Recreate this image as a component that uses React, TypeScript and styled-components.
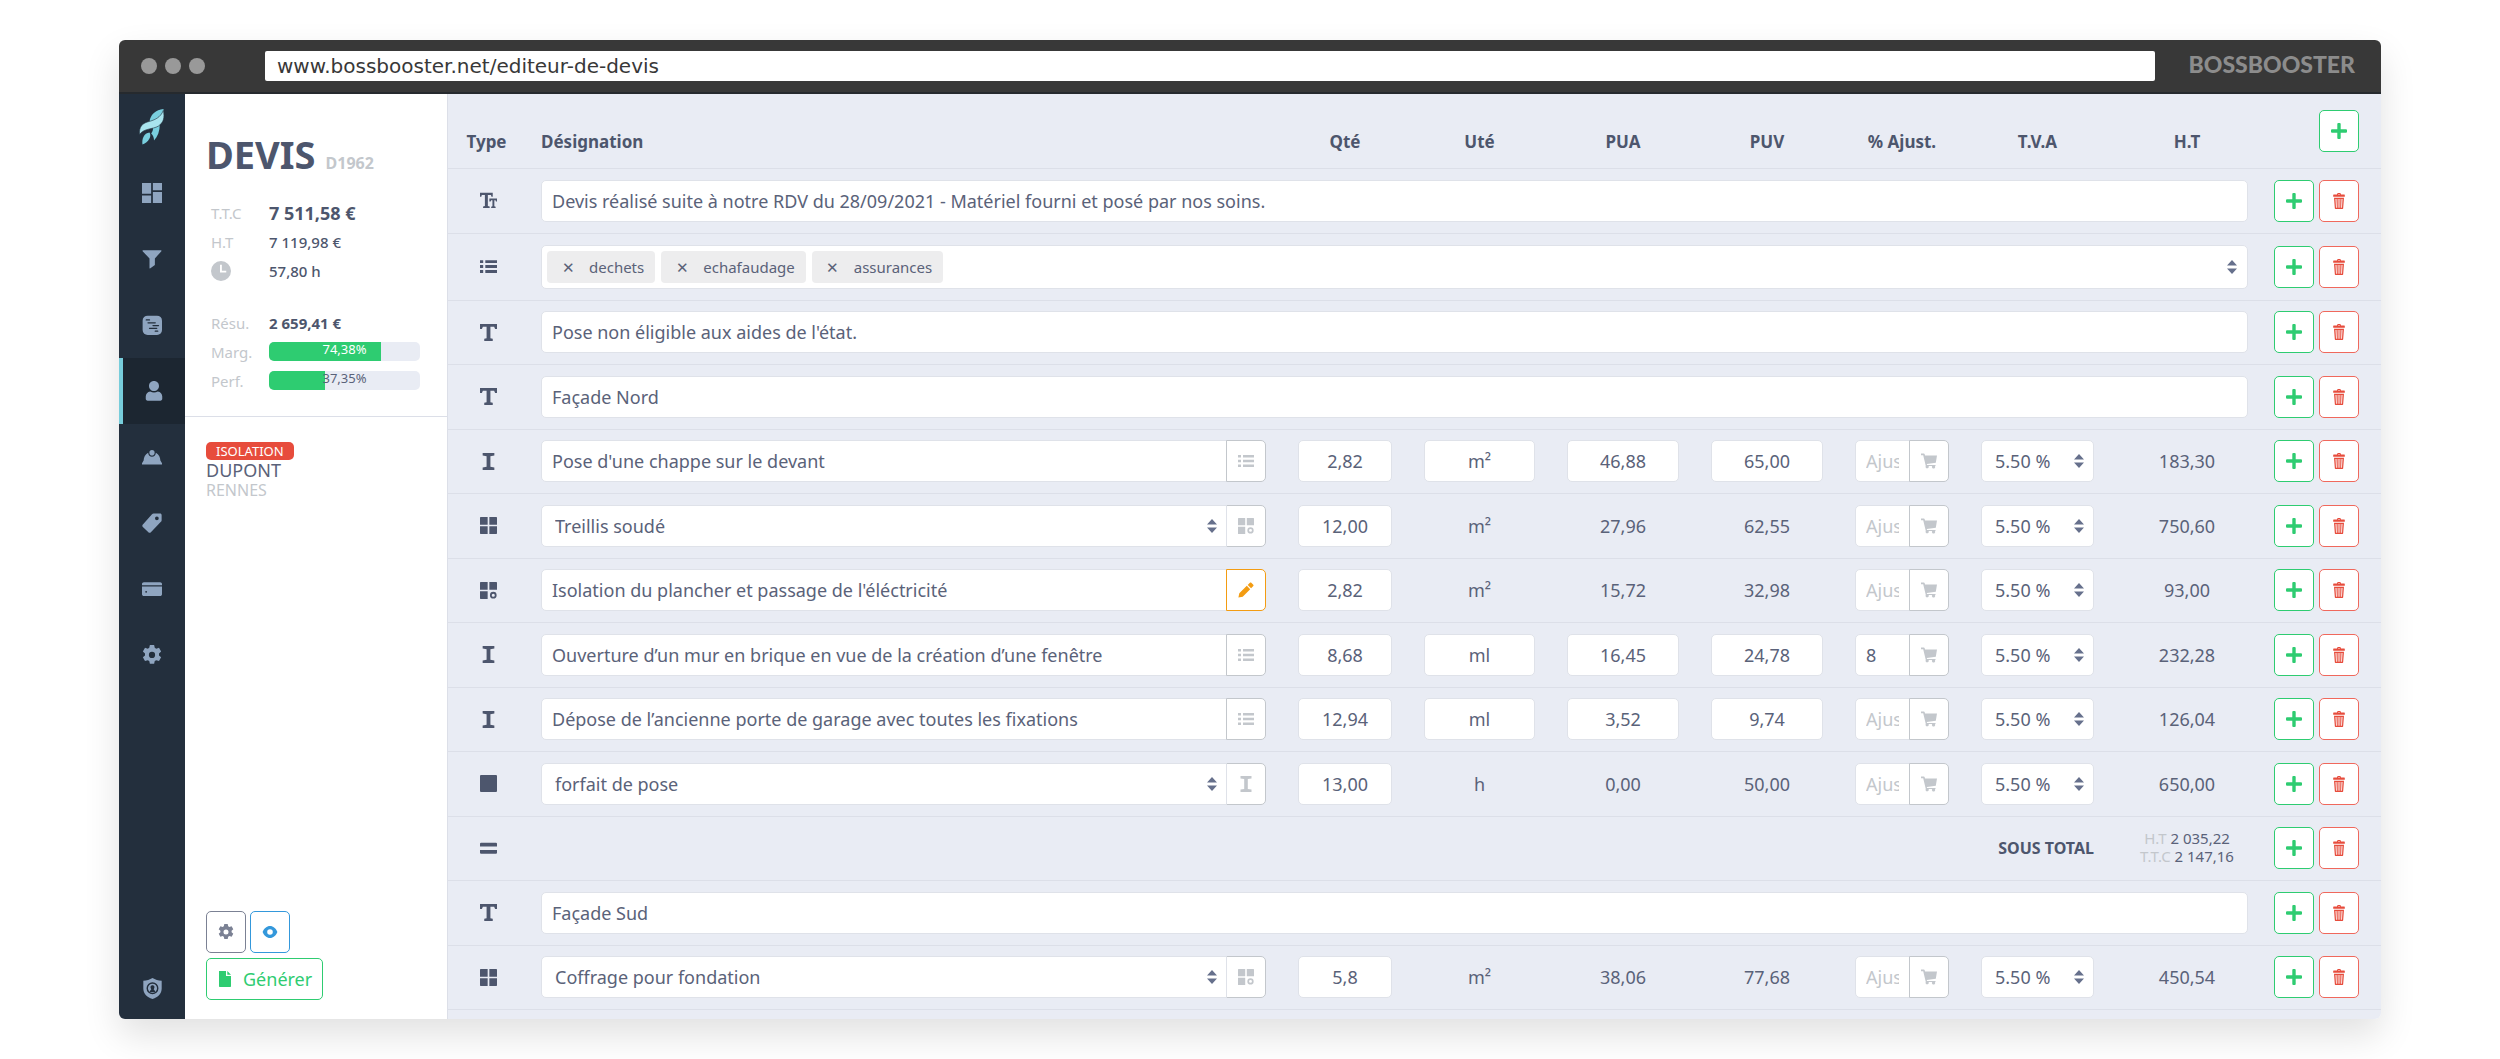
import React from "react";
import styled, { createGlobalStyle, css } from "styled-components";

const color = {
  text: "#5a6279",
  strong: "#4d566d",
  muted: "#c3c7cc",
  line: "#dcdfe8",
  field: "#dfe2e9",
  panel: "#e9ecf4",
  rail: "#232f3d",
  railActive: "#1c2631",
  railIcon: "#8fa5c0",
  green: "#2ecc71",
  red: "#e74c3c",
  redBorder: "#f0685c",
  orange: "#f39c12",
  blue: "#3498db",
  grey: "#7b8194",
};

const GlobalStyle = createGlobalStyle`
  *, *::before, *::after { box-sizing: border-box; }
  body {
    margin: 0;
    background: #fff;
    color: ${color.text};
    font-family: "Noto Sans", "Open Sans", sans-serif;
    font-size: 18px;
    line-height: 24px;
  }
  button, input, select { font: inherit; color: inherit; margin: 0; }
  svg { display: block; fill: currentColor; }
`;

/* ---------- icons ---------- */

type IconName =
  | "textSize" | "list" | "title" | "line" | "grid" | "gridGear" | "square" | "equals"
  | "plus" | "trash" | "cart" | "pencil" | "gear" | "eye" | "file" | "clock"
  | "dashboard" | "funnel" | "notes" | "user" | "helmet" | "tag" | "card" | "shield";

const icons: Record<IconName, React.ReactNode> = {
  textSize: (
    <path d="M0 .6h12v3.800h-1.200L10.300 2.800H7.400v10.400l1.700.5V15H2.900v-1.300l1.700-.5V2.800H1.700l-.5 1.600H0zM8.800 6H16v3h-1l-.4-1.200h-1.100v5.600l1.200.4V15h-4.200v-1.200l1.200-.4V7.800h-1.200L10 9H8.800z" />
  ),
  list: (
    <path d="M0 2h3v2.600H0zM5 2h11v2.600H5zM0 6.700h3v2.600H0zM5 6.700h11v2.600H5zM0 11.400h3V14H0zM5 11.400h11V14H5z" />
  ),
  title: <path d="M0 0h16v4.800h-1.800l-.9-2.200H9.800v10.700l2.200.6V16H4v-2.100l2.200-.6V2.600H2.700l-.9 2.200H0z" />,
  line: <path d="M2.500 0h11v2.400l-3.700.6v10l3.700.6V16h-11v-2.400l3.700-.6V3l-3.700-.6z" />,
  grid: (
    <path d="M.6 0h6.600v7.300H0V.6C0 .3.300 0 .6 0zM8.800 0h6.600c.3 0 .6.300.6.6v6.700H8.800zM0 8.700h7.200V16H.6a.6.6 0 0 1-.6-.6zM8.800 8.700H16v6.700c0 .3-.3.600-.6.600H8.800z" />
  ),
  gridGear: (
    <>
      <path d="M.6 0h6.600v7.300H0V.6C0 .3.300 0 .6 0zM8.800 0h6.600c.3 0 .6.300.6.6v6.700H8.800zM0 8.700h7.200V16H.6a.6.6 0 0 1-.6-.6z" />
      <circle cx="12.500" cy="12.400" r="2.300" fill="none" stroke="currentColor" strokeWidth="1.700" />
    </>
  ),
  square: <rect width="16" height="16" rx="1" />,
  equals: <path d="M1 2.500h14a1 1 0 0 1 1 1V6H0V3.500a1 1 0 0 1 1-1zM0 9.500h16V12a1 1 0 0 1-1 1H1a1 1 0 0 1-1-1z" />,
  plus: <path d="M6.300 1a1 1 0 0 1 1-1h1.400a1 1 0 0 1 1 1v5.300H15a1 1 0 0 1 1 1v1.400a1 1 0 0 1-1 1H9.700V15a1 1 0 0 1-1 1H7.300a1 1 0 0 1-1-1V9.700H1a1 1 0 0 1-1-1V7.300a1 1 0 0 1 1-1h5.300z" />,
  trash: (
    <path
      fillRule="evenodd"
      d="M6 1.500C6.100.6 6.500 0 7.200 0h1.600c.7 0 1.100.6 1.200 1.500h3.300c.3 0 .5.200.5.500v1.700H2.200V2c0-.3.200-.5.500-.5zM6.900 1.500h2.200c0-.4-.2-.6-.5-.6H7.400c-.3 0-.5.200-.5.600zM3 4.700h10l-.8 10.200c0 .6-.4 1.100-1 1.100H4.800c-.6 0-1-.5-1-1.100zM4.500 6l.5 8.700h.8L5.500 6zM6.700 6l.1 8.700h.7V6zM8.500 6v8.700h.7l.1-8.700zM10.500 6l-.3 8.700h.8l.5-8.700z"
    />
  ),
  cart: (
    <path d="M0 .5h2.800c.4 0 .8.300.9.700L4 2.500h12l-1.200 7.300-9 1.100.2 1h8.500v1.200h-.6a1.600 1.600 0 1 1-2.700 0H7.600a1.600 1.600 0 1 1-2.800-.2L2.200 2.200H0z" />
  ),
  pencil: <path d="M1.300 11.300l7.500-7.500 3.400 3.400-7.500 7.500L.4 15.600zM9.700 2.900L11.900.7c.4-.4 1-.4 1.400 0l2 2c.4.400.4 1 0 1.400l-2.200 2.200z" />,
  gear: (
    <path
      fillRule="evenodd"
      d="M6.300 0h3.400l.5 2.200 1.200.7 2.200-.7 1.700 3-1.700 1.500v1.600l1.700 1.500-1.700 3-2.200-.7-1.200.7-.5 2.200H6.300l-.5-2.200-1.200-.7-2.200.7-1.700-3 1.700-1.500V6.700L.7 5.200l1.700-3 2.200.7 1.200-.7zM8 5.400A2.500 2.500 0 1 0 8 10.400 2.500 2.500 0 1 0 8 5.400z"
    />
  ),
  eye: (
    <path
      fillRule="evenodd"
      d="M8 2c3.200 0 6 2.400 7.400 6-1.400 3.600-4.200 6-7.400 6S2 11.600.6 8C2 4.400 4.800 2 8 2zm0 3.200a2.800 2.800 0 1 0 0 5.600 2.800 2.800 0 0 0 0-5.600z"
    />
  ),
  file: <path d="M2 0h7v5h5v10.300c0 .4-.3.700-.7.700H2.700a.7.700 0 0 1-.7-.7zM10.300 0L14 3.800h-3.700z" />,
  clock: <path fillRule="evenodd" d="M8 0a8 8 0 1 1 0 16A8 8 0 0 1 8 0zM7.200 3v6.200h5V7.800H8.700V3z" />,
  dashboard: <path d="M0 0h7.300v8.500H0zM8.700 0H16v5.700H8.700zM0 9.900h7.300V16H0zM8.700 7.100H16V16H8.700z" />,
  funnel: <path d="M.8 1h14.400c.4 0 .5.400.3.700L10.300 7.600v5.200l-3.600 2.700c-.3.200-.7 0-.7-.4V7.600L.5 1.700C.3 1.400.4 1 .8 1z" />,
  notes: (
    <>
      <rect x="0.500" y="0.500" width="15.500" height="15.500" rx="4" />
      <path
        d="M3.400 3.900H6M4.800 6.200h5.800M8.800 8.400h4.400M6 10.600h5.800M10.600 12.900h2"
        fill="none"
        stroke={color.rail}
        strokeWidth="1"
        strokeLinecap="round"
      />
    </>
  ),
  user: <path d="M8 0c2.300 0 4 1.700 4 3.900S10.300 8 8 8 4 6.100 4 3.900 5.700 0 8 0zM5 8.300c1.800 1.200 4.200 1.200 6 0 2.200.3 3.600 1.900 3.600 4v1.900c0 .9-.6 1.500-1.500 1.500H2.900c-.9 0-1.500-.6-1.500-1.500v-1.900c0-2.100 1.400-3.700 3.600-4z" />,
  helmet: (
    <>
      <path d="M4.900 4.600c.2 1.900 1.400 3.200 3.100 3.200s2.900-1.300 3.100-3.200c2.400 1.300 3.500 3.700 3.600 6.200L16 13v1H0v-1l1.300-2.200c.1-2.500 1.200-4.900 3.600-6.200z" />
      <path d="M8 2.400a2.100 2.100 0 0 1 2.100 2.100c0 1.300-.9 2.300-2.100 2.300s-2.100-1-2.100-2.300A2.100 2.100 0 0 1 8 2.400z" />
    </>
  ),
  tag: (
    <path
      fillRule="evenodd"
      d="M9.300.4h5.200c.7 0 1.200.5 1.200 1.200v4.200c0 .5-.2 1-.6 1.300l-8 8.200c-.6.600-1.400.6-2 0L.7 11.200c-.6-.6-.6-1.400 0-2L8 1c.3-.4.800-.6 1.300-.6zM11.900 2.700a1.500 1.500 0 1 0 0 3 1.500 1.500 0 0 0 0-3z"
    />
  ),
  card: (
    <path
      fillRule="evenodd"
      d="M1.500 2.500h13c.8 0 1.500.6 1.500 1.400V5H0V3.900c0-.8.700-1.400 1.500-1.400zM0 6h16v6.100c0 .8-.7 1.500-1.500 1.500h-13c-.8 0-1.500-.7-1.500-1.500zm3.300 3.500a.7.700 0 1 0 0 1.500.7.700 0 0 0 0-1.500z"
    />
  ),
  shield: (
    <>
      <path d="M8 0c2 1.300 4.400 1.900 7 2v6c0 3.800-2.600 6.700-7 8-4.400-1.300-7-4.200-7-8V2c2.600-.1 5-.7 7-2z" />
      <circle cx="8" cy="7.800" r="4" fill="none" stroke={color.rail} strokeWidth="1.100" />
      <path d="M5.900 10.700c.2-1.300.9-1.900 1.200-2.200C6 7.400 6.500 5.600 8 5.600s2 1.800.9 2.900c.3.300 1 .9 1.200 2.200z" fill={color.rail} />
    </>
  ),
};

const Icon = ({ name, size = 16 }: { name: IconName; size?: number }) => (
  <svg width={size} height={size} viewBox="0 0 16 16" aria-hidden="true">
    {icons[name]}
  </svg>
);

const Rocket = () => (
  <svg width="26" height="36" viewBox="0 0 26 36" aria-hidden="true">
    <path d="M20.800 15c0 7-2 12.500-5.800 16.500 0-3-.8-5-2.800-7 1.500-2 1.800-3.500 1.800-5.500z" fill="#79cfdf" />
    <path d="M24.500 0C17 .8 11 5.500 10.500 13l9-2C23.500 8 25 4 24.500 0z" fill="#79cfdf" />
    <path
      d="M24.300 1.500C26 8.500 24.500 13.500 19.500 17 14 20.500 5 19 .5 25.500 0 18 3 14.500 9 12.800 16 11 21.500 8.500 24.300 1.500z"
      fill="#a9e4ee"
      stroke={color.rail}
      strokeWidth="0.600"
    />
    <path d="M10.500 23.500c2.500 4-1 9.500-7 12-1-5.500 1.500-11.500 7-12z" fill="#79cfdf" />
  </svg>
);

/* ---------- window frame ---------- */

const Page = styled.div`
  display: flex;
  flex-direction: column;
  min-height: 100vh;
  padding: 40px 119px;
`;

const Window = styled.div`
  flex: 1;
  display: flex;
  flex-direction: column;
  border-radius: 6px;
  overflow: hidden;
  background: #fff;
  box-shadow: 0 16px 36px rgba(0, 0, 0, 0.12);
`;

const TitleBar = styled.header`
  display: flex;
  align-items: center;
  height: 54px;
  padding: 0 26px 0 22px;
  background: #383838;
  border-bottom: 2px solid #262a2e;
`;

const Dots = styled.div`
  display: flex;
  gap: 8px;
  margin-right: 60px;
`;

const Dot = styled.span`
  width: 16px;
  height: 16px;
  border-radius: 50%;
  background: #999;
`;

const AddressBox = styled.input`
  flex: 1;
  min-width: 0;
  height: 30px;
  margin-right: 33px;
  padding: 0 12px;
  border: 0;
  border-radius: 2px;
  background: #fff;
  color: #383838;
  font-family: "DejaVu Sans", sans-serif;
  font-size: 20px;
`;

const Brand = styled.span`
  padding-bottom: 4px;
  color: #8c8c8c;
  font-family: Lato, sans-serif;
  font-weight: 900;
  font-size: 23px;
  line-height: 24px;
`;

const Body = styled.div`
  flex: 1;
  display: grid;
  grid-template-columns: 66px 263px minmax(0, 1fr);
`;

/* ---------- navigation rail ---------- */

const Rail = styled.nav`
  display: flex;
  flex-direction: column;
  background: ${color.rail};
  color: ${color.railIcon};
`;

const RailLink = styled.a<{ $active?: boolean; $last?: boolean }>`
  display: flex;
  align-items: center;
  justify-content: center;
  height: 66px;
  color: inherit;
  ${(p) => p.$active && css`
    background: ${color.railActive};
    border-left: 4px solid #77cddb;
  `}
  ${(p) => p.$last && css`
    height: 62px;
    margin-top: auto;
  `}
`;

/* ---------- summary column ---------- */

const Summary = styled.aside`
  display: flex;
  flex-direction: column;
  border-right: 1px solid ${color.line};
  background: #fff;
`;

const SummaryHead = styled.section`
  padding: 36px 27px 21px 21px;
  border-bottom: 1px solid ${color.line};
`;

const Title = styled.h1`
  display: flex;
  align-items: baseline;
  gap: 10px;
  margin: 0 0 11px;
  color: ${color.strong};
  font-size: 38px;
  line-height: 48px;
  font-weight: 700;
`;

const Reference = styled.small`
  color: ${color.muted};
  font-size: 16px;
`;

const Figures = styled.dl`
  display: grid;
  grid-template-columns: 58px minmax(0, 1fr);
  grid-auto-rows: 29px;
  align-items: center;
  margin: 0 0 23px;
  padding-left: 5px;
  &:last-child { margin-bottom: 0; }
`;

const FigureName = styled.dt`
  color: ${color.muted};
  font-size: 15px;
`;

const FigureValue = styled.dd<{ $large?: boolean; $bold?: boolean }>`
  margin: 0;
  color: ${color.strong};
  font-size: ${(p) => (p.$large ? 18 : 15)}px;
  font-weight: ${(p) => (p.$bold ? 700 : 500)};
`;

const Meter = styled.div`
  position: relative;
  height: 19px;
  border-radius: 5px;
  background: ${color.panel};
`;

const MeterFill = styled.div`
  height: 100%;
  border-radius: 5px 0 0 5px;
  background: ${color.green};
`;

const MeterText = styled.span<{ $onFill?: boolean }>`
  position: absolute;
  inset: 0;
  color: ${(p) => (p.$onFill ? "#fff" : color.text)};
  font-size: 13px;
  font-weight: 400;
  line-height: 14px;
  text-align: center;
`;

const Client = styled.section`
  padding: 25px 21px;
`;

const Badge = styled.span`
  display: block;
  width: fit-content;
  padding: 0 10px;
  border-radius: 5px;
  background: ${color.red};
  color: #fff;
  font-size: 13px;
  line-height: 18px;
`;

const ClientName = styled.div`
  font-size: 18px;
  line-height: 20px;
`;

const ClientCity = styled.div`
  color: ${color.muted};
  font-size: 16px;
  line-height: 20px;
`;

const SummaryFoot = styled.footer`
  display: flex;
  flex-direction: column;
  align-items: flex-start;
  gap: 5px;
  margin-top: auto;
  padding: 0 21px 19px;
`;

const ButtonPair = styled.div`
  display: flex;
  gap: 4px;
`;

/* ---------- buttons ---------- */

const OutlineButton = styled.button<{ $color: string; $border?: string; $attached?: boolean }>`
  display: inline-flex;
  align-items: center;
  justify-content: center;
  gap: 10px;
  flex: none;
  width: 40px;
  height: 42px;
  padding: 0;
  border: 1px solid ${(p) => p.$border ?? p.$color};
  border-radius: 5px;
  background: #fff;
  color: ${(p) => p.$color};
  cursor: pointer;
  ${(p) => p.$attached && css`
    margin-left: -1px;
    border-top-left-radius: 0;
    border-bottom-left-radius: 0;
  `}
`;

const GenerateButton = styled(OutlineButton)`
  width: auto;
  padding: 0 10px;
`;

/* ---------- quote table ---------- */

const Main = styled.main`
  display: grid;
  padding-bottom: 9px;
  background: ${color.panel};
`;

const Table = styled.table`
  width: 100%;
  height: 100%;
  table-layout: fixed;
  border-collapse: separate;
  border-spacing: 0;
`;

const HeadRow = styled.tr`
  height: 75px;
`;

const Row = styled.tr<{ $tall?: boolean }>`
  height: ${(p) => (p.$tall ? "67px" : "auto")};
`;

const Head = styled.th<{ $left?: boolean }>`
  padding: 0 16px 14px;
  border-bottom: 1px solid ${color.line};
  color: ${color.strong};
  font-weight: 700;
  font-size: 17px;
  text-align: ${(p) => (p.$left ? "left" : "center")};
  vertical-align: bottom;
`;

const HeadAction = styled(Head)`
  padding: 16px 22px 0 0;
  text-align: right;
  vertical-align: top;
`;

const Cell = styled.td`
  padding: 10px 16px;
  border-bottom: 1px solid ${color.line};
  text-align: center;
`;

const TypeCell = styled(Cell)`
  padding-left: 32px;
  color: ${color.strong};
`;

const ActionCell = styled(Cell)`
  padding: 10px 22px 10px 0;
`;

const Actions = styled.div`
  display: flex;
  justify-content: flex-end;
  gap: 5px;
`;

const SubtotalLabel = styled(Cell)`
  color: ${color.strong};
  font-size: 16px;
  font-weight: 700;
  text-align: right;
`;

const SubtotalCell = styled(Cell)`
  padding-bottom: 13px;
`;

const SubtotalLine = styled.div`
  font-size: 15px;
  line-height: 18px;
  white-space: nowrap;
`;

const Muted = styled.span`
  color: ${color.muted};
`;

const Group = styled.div`
  display: flex;
`;

const fieldBox = css`
  width: 100%;
  min-width: 0;
  height: 42px;
  border: 1px solid ${color.field};
  border-radius: 5px;
  background: #fff;
`;

const Field = styled.input<{ $center?: boolean; $joined?: boolean }>`
  ${fieldBox}
  display: block;
  padding: 0 10px;
  text-align: ${(p) => (p.$center ? "center" : "left")};
  &::placeholder { color: ${color.muted}; opacity: 1; }
  ${(p) => p.$joined && css`
    border-top-right-radius: 0;
    border-bottom-right-radius: 0;
  `}
`;

const SelectWrap = styled.div`
  position: relative;
  flex: 1;
  min-width: 0;
`;

const SelectBox = styled.select<{ $joined?: boolean }>`
  ${fieldBox}
  display: block;
  appearance: none;
  padding: 0 30px 0 13px;
  ${(p) => p.$joined && css`
    border-top-right-radius: 0;
    border-bottom-right-radius: 0;
  `}
`;

const ArrowsMark = styled.svg`
  position: absolute;
  top: 50%;
  right: 10px;
  transform: translateY(-50%);
  pointer-events: none;
  color: #66708c;
`;

const TagBox = styled.div`
  ${fieldBox}
  position: relative;
  display: flex;
  gap: 6px;
  height: 44px;
  padding: 5px;
`;

const Tag = styled.span`
  display: flex;
  align-items: center;
  padding-right: 11px;
  border-radius: 4px;
  background: #ededee;
  font-size: 15px;
`;

const TagRemove = styled.button`
  width: 42px;
  padding: 0;
  border: 0;
  background: none;
  cursor: pointer;
`;

const Arrows = () => (
  <ArrowsMark width="10" height="14" viewBox="0 0 10 14" aria-hidden="true">
    <path d="M5 0l5 5.500H0zM5 14l5-5.500H0z" />
  </ArrowsMark>
);

const Select = ({ label, value, joined }: { label: string; value: string; joined?: boolean }) => (
  <SelectWrap>
    <SelectBox aria-label={label} defaultValue={value} $joined={joined}>
      <option>{value}</option>
    </SelectBox>
    <Arrows />
  </SelectWrap>
);

/* ---------- data ---------- */

type Line =
  | { kind: "text"; icon: IconName; text: string }
  | { kind: "tags"; tags: string[] }
  | { kind: "subtotal"; ht: string; ttc: string }
  | {
      kind: "item";
      icon: IconName;
      text: string;
      select?: boolean;
      side: IconName;
      editable?: boolean;
      qty: string;
      unit: string;
      pua: string;
      puv: string;
      adjust?: string;
      total: string;
    };

const lines: Line[] = [
  { kind: "text", icon: "textSize", text: "Devis réalisé suite à notre RDV du 28/09/2021 - Matériel fourni et posé par nos soins." },
  { kind: "tags", tags: ["dechets", "echafaudage", "assurances"] },
  { kind: "text", icon: "title", text: "Pose non éligible aux aides de l'état." },
  { kind: "text", icon: "title", text: "Façade Nord" },
  { kind: "item", icon: "line", text: "Pose d'une chappe sur le devant", side: "list", editable: true, qty: "2,82", unit: "m²", pua: "46,88", puv: "65,00", total: "183,30" },
  { kind: "item", icon: "grid", text: "Treillis soudé", select: true, side: "gridGear", qty: "12,00", unit: "m²", pua: "27,96", puv: "62,55", total: "750,60" },
  { kind: "item", icon: "gridGear", text: "Isolation du plancher et passage de l'éléctricité", side: "pencil", qty: "2,82", unit: "m²", pua: "15,72", puv: "32,98", total: "93,00" },
  { kind: "item", icon: "line", text: "Ouverture d’un mur en brique en vue de la création d’une fenêtre", side: "list", editable: true, qty: "8,68", unit: "ml", pua: "16,45", puv: "24,78", adjust: "8", total: "232,28" },
  { kind: "item", icon: "line", text: "Dépose de l’ancienne porte de garage avec toutes les fixations", side: "list", editable: true, qty: "12,94", unit: "ml", pua: "3,52", puv: "9,74", total: "126,04" },
  { kind: "item", icon: "square", text: "forfait de pose", select: true, side: "line", qty: "13,00", unit: "h", pua: "0,00", puv: "50,00", total: "650,00" },
  { kind: "subtotal", ht: "2 035,22", ttc: "2 147,16" },
  { kind: "text", icon: "title", text: "Façade Sud" },
  { kind: "item", icon: "grid", text: "Coffrage pour fondation", select: true, side: "gridGear", qty: "5,8", unit: "m²", pua: "38,06", puv: "77,68", total: "450,54" },
];

const railItems: { icon: IconName; label: string; active?: boolean }[] = [
  { icon: "dashboard", label: "Tableau de bord" },
  { icon: "funnel", label: "Prospection" },
  { icon: "notes", label: "Planning" },
  { icon: "user", label: "Clients", active: true },
  { icon: "helmet", label: "Chantiers" },
  { icon: "tag", label: "Tarifs" },
  { icon: "card", label: "Paiements" },
  { icon: "gear", label: "Réglages" },
];

/* ---------- rows ---------- */

const RowActions = () => (
  <ActionCell>
    <Actions>
      <OutlineButton type="button" $color={color.green} aria-label="Ajouter une ligne">
        <Icon name="plus" />
      </OutlineButton>
      <OutlineButton type="button" $color={color.red} $border={color.redBorder} aria-label="Supprimer la ligne">
        <Icon name="trash" />
      </OutlineButton>
    </Actions>
  </ActionCell>
);

const Amount = ({ label, value, editable }: { label: string; value: string; editable?: boolean }) => (
  <Cell>{editable ? <Field aria-label={label} defaultValue={value} $center /> : value}</Cell>
);

const LineRow = ({ line }: { line: Line }) => {
  if (line.kind === "text") {
    return (
      <Row>
        <TypeCell><Icon name={line.icon} size={17} /></TypeCell>
        <Cell colSpan={8}><Field aria-label="Désignation" defaultValue={line.text} /></Cell>
        <RowActions />
      </Row>
    );
  }
  if (line.kind === "tags") {
    return (
      <Row $tall>
        <TypeCell><Icon name="list" size={17} /></TypeCell>
        <Cell colSpan={8}>
          <TagBox>
            {line.tags.map((tag) => (
              <Tag key={tag}>
                <TagRemove type="button" aria-label={`Retirer ${tag}`}>✕</TagRemove>
                {tag}
              </Tag>
            ))}
            <Arrows />
          </TagBox>
        </Cell>
        <RowActions />
      </Row>
    );
  }
  if (line.kind === "subtotal") {
    return (
      <Row>
        <TypeCell><Icon name="equals" size={17} /></TypeCell>
        <SubtotalLabel colSpan={7}>SOUS TOTAL</SubtotalLabel>
        <SubtotalCell>
          <SubtotalLine><Muted>H.T</Muted> {line.ht}</SubtotalLine>
          <SubtotalLine><Muted>T.T.C</Muted> {line.ttc}</SubtotalLine>
        </SubtotalCell>
        <RowActions />
      </Row>
    );
  }
  return (
    <Row>
      <TypeCell><Icon name={line.icon} size={17} /></TypeCell>
      <Cell>
        <Group>
          {line.select ? (
            <Select label="Désignation" value={line.text} joined />
          ) : (
            <Field aria-label="Désignation" defaultValue={line.text} $joined />
          )}
          <OutlineButton
            type="button"
            $attached
            $color={line.side === "pencil" ? color.orange : color.muted}
            aria-label="Détail de la ligne"
          >
            <Icon name={line.side} />
          </OutlineButton>
        </Group>
      </Cell>
      <Amount label="Qté" value={line.qty} editable />
      <Amount label="Uté" value={line.unit} editable={line.editable} />
      <Amount label="PUA" value={line.pua} editable={line.editable} />
      <Amount label="PUV" value={line.puv} editable={line.editable} />
      <Cell>
        <Group>
          <Field aria-label="% Ajust." placeholder="Ajust." defaultValue={line.adjust} $joined />
          <OutlineButton type="button" $attached $color={color.muted} aria-label="Prix d'achat">
            <Icon name="cart" />
          </OutlineButton>
        </Group>
      </Cell>
      <Cell><Select label="T.V.A" value="5.50 %" /></Cell>
      <Cell>{line.total}</Cell>
      <RowActions />
    </Row>
  );
};

const ProgressMeter = ({ value, onFill }: { value: number; onFill?: boolean }) => (
  <Meter>
    <MeterFill style={{ width: `${value}%` }} />
    <MeterText $onFill={onFill}>{value.toFixed(2).replace(".", ",")}%</MeterText>
  </Meter>
);

export default function App() {
  return (
    <Page>
      <GlobalStyle />
      <Window>
        <TitleBar>
          <Dots><Dot /><Dot /><Dot /></Dots>
          <AddressBox aria-label="Adresse" defaultValue="www.bossbooster.net/editeur-de-devis" />
          <Brand>BOSSBOOSTER</Brand>
        </TitleBar>
        <Body>
          <Rail aria-label="Navigation">
            <RailLink href="#" aria-label="Accueil"><Rocket /></RailLink>
            {railItems.map((item) => (
              <RailLink key={item.icon} href="#" aria-label={item.label} $active={item.active}>
                <Icon name={item.icon} size={20} />
              </RailLink>
            ))}
            <RailLink href="#" aria-label="Compte" $last><Icon name="shield" size={21} /></RailLink>
          </Rail>

          <Summary>
            <SummaryHead>
              <Title>DEVIS <Reference>D1962</Reference></Title>
              <Figures>
                <FigureName>T.T.C</FigureName>
                <FigureValue $large $bold>7 511,58 €</FigureValue>
                <FigureName>H.T</FigureName>
                <FigureValue>7 119,98 €</FigureValue>
                <FigureName aria-label="Durée"><Icon name="clock" size={20} /></FigureName>
                <FigureValue>57,80 h</FigureValue>
              </Figures>
              <Figures>
                <FigureName>Résu.</FigureName>
                <FigureValue $bold>2 659,41 €</FigureValue>
                <FigureName>Marg.</FigureName>
                <FigureValue><ProgressMeter value={74.38} onFill /></FigureValue>
                <FigureName>Perf.</FigureName>
                <FigureValue><ProgressMeter value={37.35} /></FigureValue>
              </Figures>
            </SummaryHead>
            <Client>
              <Badge>ISOLATION</Badge>
              <ClientName>DUPONT</ClientName>
              <ClientCity>RENNES</ClientCity>
            </Client>
            <SummaryFoot>
              <ButtonPair>
                <OutlineButton type="button" $color={color.grey} aria-label="Paramètres du devis">
                  <Icon name="gear" />
                </OutlineButton>
                <OutlineButton type="button" $color={color.blue} aria-label="Aperçu">
                  <Icon name="eye" />
                </OutlineButton>
              </ButtonPair>
              <GenerateButton type="button" $color={color.green}>
                <Icon name="file" />
                Générer
              </GenerateButton>
            </SummaryFoot>
          </Summary>

          <Main>
            <Table>
              <colgroup>
                <col width="77" />
                <col />
                <col width="126" />
                <col width="143" />
                <col width="144" />
                <col width="144" />
                <col width="126" />
                <col width="145" />
                <col width="154" />
                <col width="117" />
              </colgroup>
              <thead>
                <HeadRow>
                  <Head>Type</Head>
                  <Head $left>Désignation</Head>
                  <Head>Qté</Head>
                  <Head>Uté</Head>
                  <Head>PUA</Head>
                  <Head>PUV</Head>
                  <Head>% Ajust.</Head>
                  <Head>T.V.A</Head>
                  <Head>H.T</Head>
                  <HeadAction as="td">
                    <OutlineButton type="button" $color={color.green} aria-label="Ajouter une ligne en tête">
                      <Icon name="plus" />
                    </OutlineButton>
                  </HeadAction>
                </HeadRow>
              </thead>
              <tbody>
                {lines.map((line, index) => (
                  <LineRow key={index} line={line} />
                ))}
              </tbody>
            </Table>
          </Main>
        </Body>
      </Window>
    </Page>
  );
}
